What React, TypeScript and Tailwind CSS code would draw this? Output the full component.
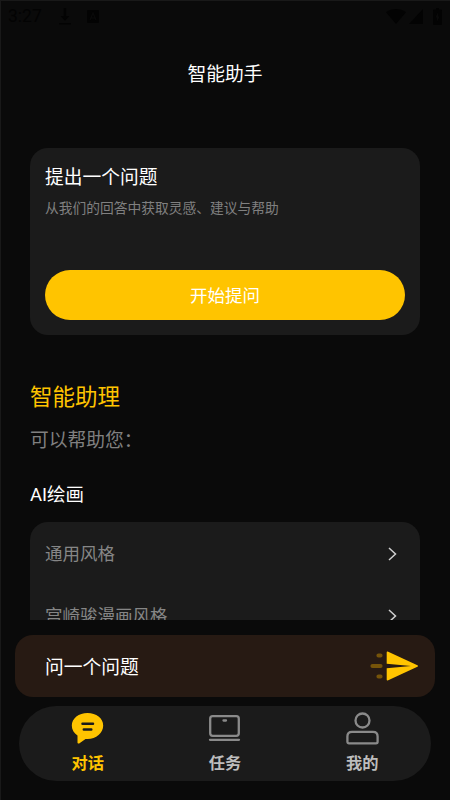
import React, { useState } from 'react';

const STYLES = ['通用风格', '宫崎骏漫画风格'];

function StatusBar() {
  return (
    <div className="flex h-[30px] shrink-0 items-center justify-between pl-[7px] pr-[8px] text-[#030303]">
      <div className="flex h-full items-center">
        <span className="w-[51px] font-[Roboto] text-[17.5px] leading-8">3:27</span>
        <svg width="12" height="17" viewBox="0 0 12 17" fill="currentColor">
          <path d="M4.800 0h2.400v8h3.200L6 12.800 1.600 8h3.200zM0 15h12v1.600H0z" />
        </svg>
        <svg className="ml-4" width="12" height="13" viewBox="0 0 12 13">
          <rect width="12" height="13" rx="1" fill="currentColor" />
          <path d="M3 10 6 3l3 7M4 8h4" fill="none" stroke="#0a0a0a" strokeWidth="1.2" />
        </svg>
      </div>
      <div className="flex items-center">
        <svg width="20" height="15" viewBox="0 0 20 15" fill="currentColor">
          <path d="M10 15 0 3.2C5.500-1 14.500-1 20 3.200z" />
        </svg>
        <svg className="ml-[3px]" width="14" height="15" viewBox="0 0 14 15" fill="currentColor">
          <path d="M14 0v15H0z" />
        </svg>
        <svg className="ml-[10px]" width="9" height="17" viewBox="0 0 9 17">
          <path d="M3 0h3v1.500h2q1 0 1 1V16q0 1-1 1H1q-1 0-1-1V2.500q0-1 1-1h2z" fill="currentColor" />
          <path d="M5 4.500 2.500 9.500H4v4L6.500 8.500H5z" fill="#0a0a0a" />
        </svg>
      </div>
    </div>
  );
}

function ChatIcon() {
  return (
    <svg width="33" height="33" viewBox="0 0 33 33">
      <path d="M16.500 1C7.800 1 .8 6.400.8 13.500c0 4.200 2.200 7.700 5.700 10v7c0 1 .9 1.400 1.700.9L14.500 26.900c1 .1 1.400.1 2 .1 8.700 0 15.700-6 15.700-13.500S25.200 1 16.500 1z" fill="currentColor" />
      <path d="M11.500 11.700h10.500M12.800 17.400h7.500" stroke="#1b1b1b" strokeWidth="2.500" strokeLinecap="round" />
    </svg>
  );
}

function TaskIcon() {
  return (
    <svg width="33" height="33" viewBox="0 0 33 33" fill="none" stroke="#8a8a8a" strokeWidth="2.300" strokeLinecap="round">
      <rect x="2.200" y="4.200" width="28.600" height="19.600" rx="2.500" />
      <path d="M15.500 8.500h2.500M2 27.800h29" />
    </svg>
  );
}

function UserIcon() {
  return (
    <svg width="33" height="33" viewBox="0 0 33 33" fill="none" stroke="#8a8a8a" strokeWidth="2.300">
      <circle cx="16.500" cy="8.500" r="7" />
      <path d="M6 19.800h21c2.800 0 4.600 1.700 4.600 4.600v5.400c0 1-.6 1.600-1.600 1.600H3c-1 0-1.600-.6-1.600-1.600v-5.400c0-2.900 1.800-4.600 4.600-4.600z" />
    </svg>
  );
}

const TABS = [
  { label: '对话', icon: <ChatIcon /> },
  { label: '任务', icon: <TaskIcon /> },
  { label: '我的', icon: <UserIcon /> },
];

export default function App() {
  const [active, setActive] = useState(0);

  return (
    <div className="flex h-[800px] w-[450px] flex-col overflow-hidden border-l border-t border-[#191919] bg-[#0a0a0a] font-['Noto_Sans_CJK_SC',sans-serif] text-white">
      <StatusBar />
      <header className="flex h-[84px] shrink-0 items-center justify-center pr-px text-[18.75px]">
        <h1>智能助手</h1>
      </header>

      <main className="h-[505px] shrink-0 overflow-hidden pl-[29px] pr-[30px] pt-[32.500px]">
        {/* Question card */}
        <section className="flex h-[187.500px] flex-col rounded-[18px] bg-[#1b1b1b] px-[15px] pb-[15px] pt-[14px]">
          <h2 className="text-[18.75px] leading-7">提出一个问题</h2>
          <p className="mt-[7px] text-[13.75px] leading-5 text-[#808080]">从我们的回答中获取灵感、建议与帮助</p>
          <button className="mt-auto h-[50px] w-full rounded-full bg-[#ffc400] text-[17.5px]">开始提问</button>
        </section>

        <h2 className="mt-[42px] text-[22.5px] leading-9 text-[#ffc400]">智能助理</h2>
        <p className="mt-[12px] text-[18.75px] leading-7 text-[#808080]">可以帮助您：</p>
        <h3 className="mt-[28px] font-[Roboto,'Noto_Sans_CJK_SC',sans-serif] text-[18.500px] leading-7">AI绘画</h3>

        <ul className="mt-[12.500px] rounded-[18px] bg-[#1b1b1b] px-[15px]">
          {STYLES.map((name) => (
            <li key={name} className="flex h-[62.5px] items-center justify-between text-[17.5px] text-[#868686]">
              <span>{name}</span>
              <svg className="mr-[8px] mt-[2px]" width="9" height="14" viewBox="0 0 9 14" fill="none" stroke="#d0d0d0" strokeWidth="1.500">
                <path d="M1 1l6.500 6L1 13" />
              </svg>
            </li>
          ))}
        </ul>
      </main>

      {/* Ask bar */}
      <div className="ml-[14px] mr-[15px] mt-[14.500px] flex h-[62.5px] shrink-0 items-center justify-between rounded-[18px] bg-[#271a13] pl-[30px] pr-4">
        <span className="text-[18.75px]">问一个问题</span>
        <svg width="50" height="32" viewBox="0 0 50 32">
          <path d="M9.500 5.500h2M3.500 16h8M9.500 26.500h2" stroke="#765409" strokeWidth="4.200" strokeLinecap="round" />
          <path d="M17.700 2.200c0-.6.5-.9 1-.7l29.700 13.700c.8.300.8 1.300 0 1.600L18.700 30.500c-.5.200-1-.1-1-.7V18.300L42 16 17.700 13.700z" fill="#ffc400" />
        </svg>
      </div>

      <nav className="ml-[18px] mr-[19px] mt-[9px] grid h-[75px] shrink-0 grid-cols-3 rounded-full bg-[#1b1b1b]">
        {TABS.map((tab, i) => (
          <button
            key={tab.label}
            onClick={() => setActive(i)}
            className={`flex flex-col items-center pt-[6px] text-[16.25px] font-bold ${i === active ? 'text-[#ffc400]' : 'text-[#bdbdbd]'}`}
          >
            {tab.icon}
            <span className="mt-[5px] leading-6">{tab.label}</span>
          </button>
        ))}
      </nav>
    </div>
  );
}
